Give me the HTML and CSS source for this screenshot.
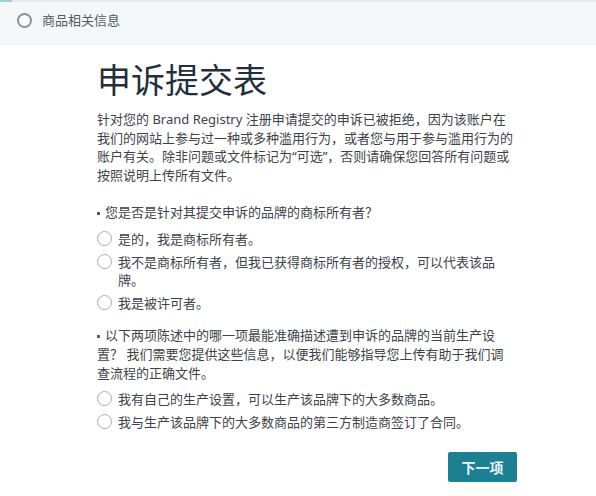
FILE: index.html
```html
<!DOCTYPE html>
<html lang="zh-CN">
<head>
<meta charset="utf-8">
<title>申诉提交表</title>
<link rel="stylesheet" href="styles.css">
</head>
<body>
<header class="stepbar">
  <span class="step-radio"></span>
  <span class="step-label">商品相关信息</span>
</header>
<main class="content">
  <h1 class="title">申诉提交表</h1>
  <p class="intro">针对您的 Brand Registry 注册申请提交的申诉已被拒绝，因为该账户在我们的网站上参与过一种或多种滥用行为，或者您与用于参与滥用行为的账户有关。除非问题或文件标记为“可选”，否则请确保您回答所有问题或按照说明上传所有文件。</p>
  <section class="form">
    <div class="question">您是否是针对其提交申诉的品牌的商标所有者？</div>
    <label class="option opt-first"><span class="radio"></span><span class="opt-text">是的，我是商标所有者。</span></label>
    <label class="option"><span class="radio"></span><span class="opt-text">我不是商标所有者，但我已获得商标所有者的授权，可以代表该品牌。</span></label>
    <label class="option"><span class="radio"></span><span class="opt-text">我是被许可者。</span></label>
    <div class="question q-next">以下两项陈述中的哪一项最能准确描述遭到申诉的品牌的当前生产设置？ 我们需要您提供这些信息，以便我们能够指导您上传有助于我们调查流程的正确文件。</div>
    <label class="option opt-first"><span class="radio"></span><span class="opt-text">我有自己的生产设置，可以生产该品牌下的大多数商品。</span></label>
    <label class="option"><span class="radio"></span><span class="opt-text">我与生产该品牌下的大多数商品的第三方制造商签订了合同。</span></label>
  </section>
  <div class="actions">
    <button class="next-btn" type="button">下一项</button>
  </div>
</main>
</body>
</html>
```

FILE: styles.css
```css
* { box-sizing: border-box; }

html, body {
  margin: 0;
  padding: 0;
  background: #ffffff;
}

body {
  font-family: "Noto Sans", "Noto Sans CJK SC", sans-serif;
  font-size: 13px;
  color: #3a3f44;
}

.stepbar {
  position: relative;
  height: 45px;
  background: #f3f7f9;
  border-top: 2px solid #e4e9ec;
  border-bottom: 1px solid #eef2f4;
  padding: 9px 17px 0;
  display: flex;
  align-items: flex-start;
}

.stepbar::before {
  content: "";
  position: absolute;
  left: 0;
  top: -2px;
  width: 12px;
  height: 2px;
  background: #9fd0d6;
}

.step-radio {
  width: 15px;
  height: 15px;
  margin-top: 2px;
  border: 2px solid #8e9397;
  border-radius: 50%;
  background: #fbfcfd;
  flex: none;
}

.step-label {
  margin-left: 10px;
  line-height: 19px;
  color: #555b60;
}

.content {
  margin-left: 97px;
  width: 420px;
}

.title {
  margin: 15px 0 0;
  font-size: 34px;
  line-height: 40px;
  font-weight: 400;
  color: #232f3e;
}

.intro {
  margin: 10px 0 0;
  width: 418px;
  line-height: 18.6px;
  color: #3d4349;
}

.form {
  width: 409px;
  margin-top: 19px;
}

.question {
  line-height: 18.6px;
  color: #3d4349;
}

.question::before {
  content: "";
  display: inline-block;
  width: 3px;
  height: 3px;
  background: #555b60;
  margin-right: 5px;
  vertical-align: middle;
}

.q-next {
  margin-top: 14px;
}

.option {
  display: flex;
  align-items: flex-start;
  margin-top: 4px;
  line-height: 18.6px;
  color: #3d4349;
}

.option.opt-first {
  margin-top: 8px;
}

.radio {
  width: 15px;
  height: 15px;
  margin-top: 1px;
  border: 1.5px solid #a8acaf;
  border-radius: 50%;
  background: #ffffff;
  flex: none;
}

.opt-text {
  margin-left: 6px;
}

.actions {
  display: flex;
  justify-content: flex-end;
  margin-top: 21px;
}

.next-btn {
  width: 69px;
  height: 30px;
  border: none;
  border-radius: 2px;
  background: #1b8092;
  color: #eaf6f8;
  font-family: "Noto Sans", "Noto Sans CJK SC", sans-serif;
  font-size: 14px;
  font-weight: 700;
  padding: 0;
}
```
